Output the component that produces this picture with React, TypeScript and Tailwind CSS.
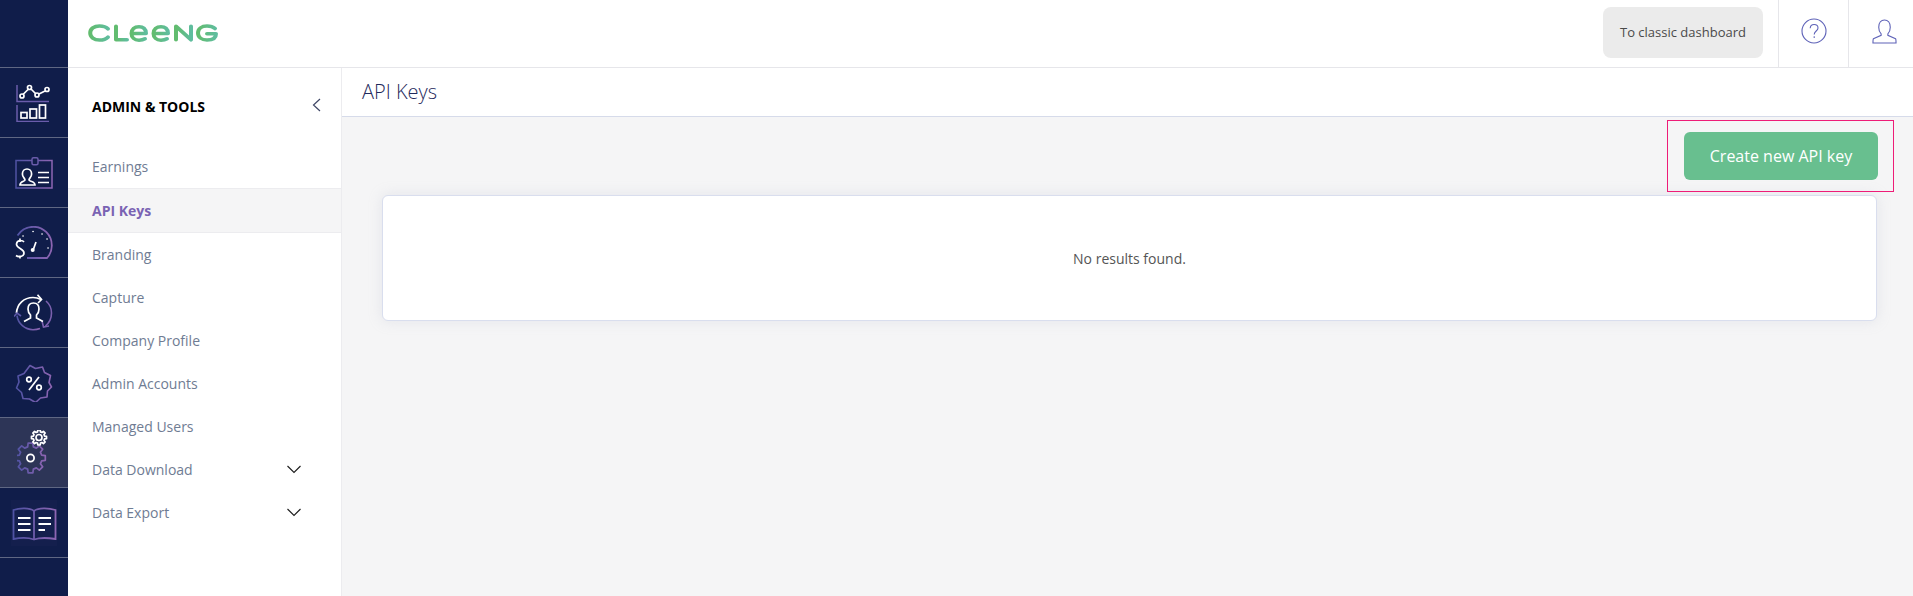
import React from "react";

const Grad = ({ id }: { id: string }) => (
  <defs>
    <linearGradient id={id} x1="0" y1="0" x2="1" y2="0">
      <stop offset="0" stopColor="#4f52a3" />
      <stop offset="1" stopColor="#8d65b2" />
    </linearGradient>
  </defs>
);

const W = { fill: "none", stroke: "#ffffff", strokeWidth: 1.7 };

function ChartIcon() {
  return (
    <svg width="36" height="38" viewBox="0 0 36 38">
      <path d="M1 1V17.500H33M1 21V37.500H33" fill="none" stroke="#6a5cab" strokeWidth="1.500" />
      <path d="M7 10.500L12.500 5M15 5L20 10M23 10L29 7" {...W} />
      <circle cx="6" cy="12" r="2" {...W} />
      <circle cx="13.500" cy="3.500" r="2" {...W} />
      <circle cx="21" cy="11" r="2" {...W} />
      <circle cx="31" cy="5.500" r="2" {...W} />
      <rect x="5" y="28.500" width="6" height="5.500" {...W} />
      <rect x="14" y="25" width="6.500" height="9" {...W} />
      <rect x="23.500" y="21" width="6" height="13" {...W} />
    </svg>
  );
}

function IdIcon() {
  return (
    <svg width="38" height="32" viewBox="0 0 38 32">
      <Grad id="g2" />
      <path d="M17 3.500H1V31H37V3.500H23" fill="none" stroke="url(#g2)" strokeWidth="1.500" />
      <rect x="17" y="0.800" width="6" height="7" rx="1.500" fill="none" stroke="#6a5cab" strokeWidth="1.500" />
      <path d="M10 23c0-2-2.600-2.500-2.600-6 0-3 2-5 4.600-5s4.600 2 4.600 5c0 3.500-2.600 4-2.600 6 0 1.500 6 1 6 5H5c0-4 5-3.500 5-5z" {...W} />
      <path d="M23 15.500H34M23 20.500H34M23 25.500H34" {...W} />
    </svg>
  );
}

function SpeedIcon() {
  return (
    <svg width="38" height="34" viewBox="0 0 38 34">
      <Grad id="g3" />
      <path d="M2.500 9.500C6 4 11 .8 18.500 .8 28.500 .8 36.800 9 36.800 19.500c0 4.500-1.500 9-4.800 12.500H12" fill="none" stroke="url(#g3)" strokeWidth="1.800" />
      <path d="M9 16C7.500 14 2 13.500 1.500 18c-.5 4.500 7.500 4.500 7.500 9 0 4-5.500 4.500-8 2.500M5 12.500V16M5 29.500V32.500" {...W} />
      <circle cx="17.700" cy="24" r="2" fill="#fff" />
      <path d="M18.500 23L21 16" {...W} />
      <path d="M8 10h.1M18 5.500h.1M27 8h.1M32 13h.1M33 22h.1" fill="none" stroke="#fff" strokeWidth="1.600" strokeLinecap="round" />
    </svg>
  );
}

function CycleIcon() {
  return (
    <svg width="40" height="38" viewBox="0 0 40 38">
      <Grad id="g4" />
      <path d="M2.500 19C3 10 10 3.500 19 3.500c3 0 5 .5 8 2" {...W} />
      <path d="M23.500 .8L27.500 5.500 24 9" {...W} />
      <path d="M32 7c3.500 3 5.500 7 5.500 12 0 6-2.500 10-6 13" fill="none" stroke="#7b60ae" strokeWidth="1.600" />
      <path d="M28 27l1.500 6 5.500-1" fill="none" stroke="#7b60ae" strokeWidth="1.600" />
      <path d="M26 34.500c-2 .8-4.500 1.200-7 1.200-8 0-15-6-16-14" fill="none" stroke="url(#g4)" strokeWidth="1.600" />
      <path d="M0 22.500l3-3.500 4 3" fill="none" stroke="#5d58a8" strokeWidth="1.600" />
      <path d="M10 27.500l6.500-3.500v-3c-1.500-1.500-2.500-3.500-2.500-6 0-3.500 2-6 5.500-6s5.500 2.500 5.500 6c0 2.500-1 4.500-2.500 6v3l6.500 3.500" {...W} />
    </svg>
  );
}

function BadgeIcon() {
  return (
    <svg width="38" height="38" viewBox="0 0 38 38">
      <Grad id="g5" />
      <path d="M15 1.500l5.500 3 7-1.500 2 5.500 6 3-1.500 7 2.500 4.500-4 4-.5 6-6.500 1-5 4.500-6-3.500-6.500-.5-1.500-6-5-4.500 2.500-6-1-6 6-2.500z" fill="none" stroke="url(#g5)" strokeWidth="1.600" strokeLinejoin="round" />
      <path d="M24 13L14 26" {...W} />
      <circle cx="14" cy="15.500" r="2.300" {...W} />
      <circle cx="24" cy="23.500" r="2.300" {...W} />
    </svg>
  );
}

function gearPath(cx: number, cy: number, ro: number, ri: number, teeth: number) {
  const pts: string[] = [];
  const step = (Math.PI * 2) / teeth;
  for (let i = 0; i < teeth; i++) {
    const a = i * step - Math.PI / 2;
    const d = step * 0.2;
    const list: [number, number][] = [
      [ri, a - step * 0.32],
      [ro, a - d],
      [ro, a + d],
      [ri, a + step * 0.32],
    ];
    for (const [r, t] of list) pts.push(`${(cx + r * Math.cos(t)).toFixed(2)} ${(cy + r * Math.sin(t)).toFixed(2)}`);
  }
  return "M" + pts.join("L") + "Z";
}

function GearIcon() {
  return (
    <svg width="34" height="45" viewBox="0 0 34 45">
      <Grad id="g6" />
      <path d={gearPath(13.500, 28, 15, 11.500, 8)} fill="none" stroke="url(#g6)" strokeWidth="1.700" strokeLinejoin="round" />
      <circle cx="13.500" cy="28" r="3.600" fill="none" stroke="#fff" strokeWidth="1.800" />
      <path d={gearPath(22, 7.500, 7.600, 5.800, 8)} {...W} strokeLinejoin="round" />
      <circle cx="22" cy="7.500" r="3" {...W} />
    </svg>
  );
}

function BookIcon() {
  return (
    <svg width="46" height="46" viewBox="0 0 46 46" className="bg-[#141f4d]">
      <Grad id="g7" />
      <path d="M23 39.500V11C19 7.500 8 8 2.500 10V39C9 37.800 18 37.800 23 39.500 28 37.800 37 37.800 44.500 39V10C38 8 27 7.500 23 11" fill="none" stroke="url(#g7)" strokeWidth="1.800" />
      <path d="M7 18H19.500M7 24H19.500M7 30H19.500M27.500 18H40M27.500 24H40M27.500 30H34" fill="none" stroke="#fff" strokeWidth="2" />
    </svg>
  );
}

const railRows: { icon: React.ReactNode; active?: boolean }[] = [
  { icon: <ChartIcon /> },
  { icon: <IdIcon /> },
  { icon: <SpeedIcon /> },
  { icon: <CycleIcon /> },
  { icon: <BadgeIcon /> },
  { icon: <GearIcon />, active: true },
  { icon: <BookIcon /> },
];

const menu: { label: string; active?: boolean; chevron?: boolean }[] = [
  { label: "Earnings" },
  { label: "API Keys", active: true },
  { label: "Branding" },
  { label: "Capture" },
  { label: "Company Profile" },
  { label: "Admin Accounts" },
  { label: "Managed Users" },
  { label: "Data Download", chevron: true },
  { label: "Data Export", chevron: true },
];

function Logo() {
  return (
    <svg width="131" height="18" viewBox="0 0 131 20" preserveAspectRatio="none" role="img" aria-label="Cleeng" className="mb-[2px]">
      <defs>
        <linearGradient id="lg" x1="0" y1="0" x2="1" y2="0">
          <stop offset="0" stopColor="#62bc6e" />
          <stop offset="1" stopColor="#5fbd9e" />
        </linearGradient>
      </defs>
      <g fill="none" stroke="url(#lg)" strokeWidth="4" strokeLinecap="round" strokeLinejoin="round">
        <path d="M20 5.500C18 3 15 2.200 11.500 2.200 6 2.200 2.200 5.500 2.200 10s3.800 7.800 9.300 7.800c3.500 0 6.500-.8 8.500-3.300" />
        <path d="M28 2.500V17.500H39" />
        <path d="M45 10.500H58C58 5.500 55 3 51 3 46.500 3 43.500 6 43.500 10.500S46.500 18 51 18c2.500 0 4.500-.5 6-1.500" />
        <path d="M66 10.500H80C80 5.500 77 3 73 3 68.500 3 65.500 6 65.500 10.500S68.500 18 73 18c2.500 0 4.500-.5 6-1.500" />
        <path d="M88 17.500V2.500L103 17.500V2.500" />
        <path d="M127 5C125 3 122 2.200 119 2.200 113.500 2.200 110 5.500 110 10s3.500 7.800 9 7.800c5 0 9-2 9-7H119" />
      </g>
    </svg>
  );
}

export default function App() {
  return (
    <div className="flex h-[596px] w-[1913px] overflow-hidden bg-[#f5f5f6] font-['Open_Sans',sans-serif]">
      <aside className="w-[68px] shrink-0 bg-[#101d4a] pt-[67px]">
        {railRows.map((r, i) => (
          <div
            key={i}
            className={`flex h-[70px] items-center justify-center border-t border-[#5f6783] ${r.active ? "bg-[#2d3557]" : ""}`}
          >
            {r.icon}
          </div>
        ))}
        <div className="border-t border-[#5f6783]" />
      </aside>

      <div className="flex min-w-0 flex-1 flex-col">
        <header className="flex h-[68px] shrink-0 items-center border-b border-[#e6e6ea] bg-white pl-[20px]">
          <Logo />
          <div className="ml-auto flex h-full items-stretch">
            <button className="my-[7px] mr-[15px] h-[51px] w-[160px] rounded-lg bg-[#ebebeb] text-[13px] text-[#4a4a4a]">
              To classic dashboard
            </button>
            <div className="flex w-[70px] items-center justify-center border-l border-[#e6e6ea] pb-[5px]">
              <svg width="26" height="26" viewBox="0 0 26 26" fill="none" stroke="#5f63b8" strokeWidth="1.100">
                <circle cx="13" cy="13" r="12" />
                <path d="M9.200 10.200C9.400 7.800 11 6.500 13.100 6.500c2.300 0 3.900 1.500 3.900 3.400 0 3-3.800 3.200-3.800 6.600" />
                <path d="M13.200 18.200v1.800" />
              </svg>
            </div>
            <div className="flex w-[65px] items-center justify-center border-l border-[#e6e6ea] pb-[5px] pl-[6px]">
              <svg width="25" height="25" viewBox="0 0 26 26" fill="none" stroke="#5f63b8" strokeWidth="1.150">
                <path d="M9.500 15.500c-1.500-1.500-2.500-4-2.500-7C7 4 9.500 1 13 1s6 3 6 7.500c0 3-1 5.500-2.500 7v1.500L24.500 20.500c.5.500.5 4 .5 4.500H1c0-.5 0-4 .5-4.500L9.500 17z" />
              </svg>
            </div>
          </div>
        </header>

        <div className="flex min-h-0 flex-1">
          <nav className="w-[274px] shrink-0 border-r border-[#ececef] bg-white">
            <div className="flex h-[77px] items-center justify-between pl-[24px] pr-[19px]">
              <span className="text-[14px] font-bold text-black">ADMIN &amp; TOOLS</span>
              <svg width="10" height="14" viewBox="0 0 10 14" fill="none" stroke="#3f4766" strokeWidth="1.200" className="mb-[3px]">
                <path d="M8 1L1.500 7 8 13" />
              </svg>
            </div>
            <ul>
              {menu.map((m) => (
                <li
                  key={m.label}
                  className={`flex items-center justify-between pl-[24px] pr-[39px] text-[14px] ${
                    m.active
                      ? "h-[45px] border-y border-[#ececef] bg-[#f5f5f6] font-bold text-[#7a63b3]"
                      : "h-[43px] text-[#6f7c93]"
                  }`}
                >
                  {m.label}
                  {m.chevron && (
                    <svg width="16" height="9" viewBox="0 0 16 9" fill="none" stroke="#1c1c1c" strokeWidth="1.100">
                      <path d="M1.500 1L8 7.500 14.500 1" />
                    </svg>
                  )}
                </li>
              ))}
            </ul>
          </nav>

          <main className="min-w-0 flex-1">
            <div className="flex h-[49px] items-center border-b border-[#d6dbea] bg-white pl-[20px]">
              <h1 className="text-[20px] font-light text-[#1f2a5c]">API Keys</h1>
            </div>
            <div className="flex justify-end pr-[19px] pt-[3px]">
              <div className="border border-[#ee1c78] pl-[16px] pr-[15px] pt-[11px] pb-[11px]">
                <button className="h-[48px] w-[194px] rounded-md bg-[#68bf8f] text-[16px] text-white">
                  Create new API key
                </button>
              </div>
            </div>
            <section className="ml-[40px] mr-[36px] mt-[3px] flex h-[126px] items-center justify-center rounded-md border border-[#d9deee] bg-white text-[14px] text-[#555] shadow-[0_0_14px_rgba(180,185,205,0.25)]">
              No results found.
            </section>
          </main>
        </div>
      </div>
    </div>
  );
}
